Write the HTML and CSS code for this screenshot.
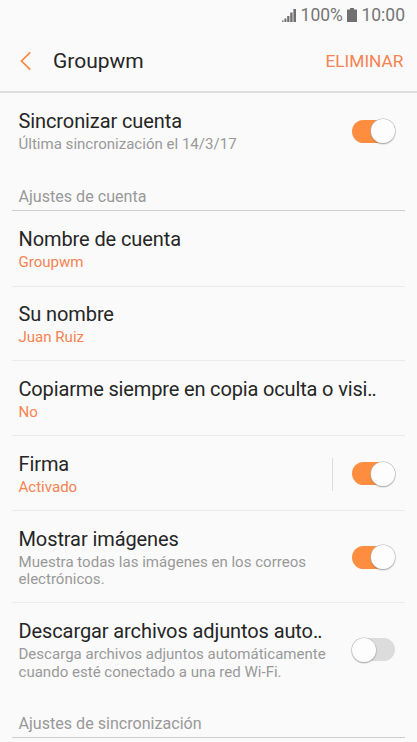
FILE: index.html
```html
<!DOCTYPE html>
<html lang="es">
<head>
<meta charset="utf-8">
<title>Groupwm</title>
<link rel="stylesheet" href="styles.css">
</head>
<body>
<div class="status">
  <svg class="signal" width="15" height="14" viewBox="0 0 15 14"><path d="M0 14v-1.500h1.500V14zM2.400 14v-3.500h2V14zM5.200 14V8h2.200v6zM8.200 14V4.500h2.400V14zM11.400 14V1h2.600v13z"/></svg>
  <span class="percent">100%</span>
  <svg class="battery" width="10" height="14" viewBox="0 0 10 14"><path d="M3 0h4v1.500h3V14H0V1.500h3z"/></svg>
  <span class="clock">10:00</span>
</div>
<header class="bar">
  <svg class="back" width="12" height="20" viewBox="0 0 12 20"><path d="M10.300 1.300 1.500 10l8.800 8.700"/></svg>
  <h1 class="heading">Groupwm</h1>
  <span class="action">ELIMINAR</span>
</header>
<main class="list">
  <section class="row sync">
    <div class="text"><div class="title">Sincronizar cuenta</div><div class="sub">Última sincronización el 14/3/17</div></div>
    <div class="switch on"></div>
  </section>
  <h2 class="group">Ajustes de cuenta</h2>
  <section class="row first">
    <div class="text"><div class="title">Nombre de cuenta</div><div class="sub value">Groupwm</div></div>
  </section>
  <section class="row second">
    <div class="text"><div class="title">Su nombre</div><div class="sub value">Juan Ruiz</div></div>
  </section>
  <section class="row">
    <div class="text"><div class="title long">Copiarme siempre en copia oculta o visi<span class="dots">..</span></div><div class="sub value">No</div></div>
  </section>
  <section class="row">
    <div class="text"><div class="title">Firma</div><div class="sub value">Activado</div></div>
    <div class="separator"></div>
    <div class="switch on"></div>
  </section>
  <section class="row tall">
    <div class="text"><div class="title">Mostrar imágenes</div><div class="sub">Muestra todas las imágenes en los correos<br>electrónicos.</div></div>
    <div class="switch on"></div>
  </section>
  <section class="row tall last">
    <div class="text"><div class="title">Descargar archivos adjuntos auto<span class="dots">..</span></div><div class="sub">Descarga archivos adjuntos automáticamente<br>cuando esté conectado a una red Wi-Fi.</div></div>
    <div class="switch"></div>
  </section>
  <h2 class="group">Ajustes de sincronización</h2>
</main>
</body>
</html>
```
FILE: styles.css
```css
* { box-sizing: border-box; }
body {
  margin: 0;
  height: 742px;
  overflow: hidden;
  background: #fafafa;
  color: #262626;
  font-family: Roboto, "Noto Sans", sans-serif;
  white-space: nowrap;
}
.status {
  display: flex;
  align-items: center;
  justify-content: flex-end;
  height: 30px;
  padding-right: 12px;
  color: #757575;
  font-size: 17.5px;
}
.status svg { fill: #707070; }
.signal { margin-right: 4px; }
.battery { margin: 0 4.5px 0 4px; }
.bar {
  display: flex;
  align-items: center;
  height: 63px;
  padding: 0 13.5px 0 20px;
  border-bottom: 2px solid #dedede;
}
.back { fill: none; stroke: #ff8545; stroke-width: 1.7; }
.heading {
  flex: 1;
  margin: 0 0 0 21px;
  font-size: 21px;
  font-weight: 400;
}
.action { color: #f68350; font-size: 17.3px; }
.list { padding: 0 12px; }
.row {
  display: flex;
  align-items: center;
  height: 75px;
  padding: 2px 10px 0 6.5px;
  border-bottom: 1px solid #ebebeb;
}
.sync { height: 76px; border: 0; padding-top: 1px; }
.first { height: 76px; padding-top: 1px; }
.second { height: 74px; }
.tall { height: 92px; }
.last { border: 0; }
.text { flex: 1; }
.title { font-size: 20px; line-height: 24px; letter-spacing: -.1px; }
.long { letter-spacing: -.15px; }
.dots { letter-spacing: -1px; }
.sub {
  margin-top: 3px;
  color: #999;
  font-size: 15.05px;
  line-height: 17.5px;
}
.value { color: #f68350; }
.group {
  display: flex;
  align-items: flex-end;
  height: 42px;
  margin: 0;
  padding: 0 6.5px 4px;
  border-bottom: 1px solid #cdcdcd;
  color: #999;
  font-size: 16.1px;
  font-weight: 400;
  line-height: 18px;
}
.last + .group { height: 43px; }
.separator { width: 1px; height: 33px; margin-right: 19px; background: #dedede; }
.switch {
  display: flex;
  align-items: center;
  width: 43px;
  height: 23px;
  margin-top: -1px;
  border-radius: 12px;
  background: #dcdcdc;
}
.switch::before {
  content: "";
  width: 24px;
  height: 24px;
  flex: none;
  border-radius: 50%;
  background: #fdfdfd;
  box-shadow: 0 0 0 .6px #bbb, 0 1px 1.500px #0006;
}
.on { justify-content: flex-end; background: #ff8d40; }
```
